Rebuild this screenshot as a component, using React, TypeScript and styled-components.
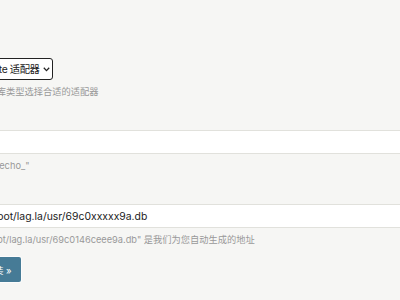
import styled, { createGlobalStyle } from 'styled-components'

const GlobalStyle = createGlobalStyle`
  html, body {
    margin: 0;
    padding: 0;
    background: #f6f6f4;
    overflow: hidden;
  }
  body {
    font-family: Inter, "Noto Sans CJK SC", sans-serif;
    color: #444;
  }
`

const Page = styled.div`
  width: 400px;
  height: 300px;
  overflow: hidden;
`

const Form = styled.form`
  margin-left: -68px;
  padding-top: 40px;
  width: 620px;
  display: flex;
  flex-direction: column;
`

const Row = styled.div`
  display: flex;
  flex-direction: column;
  align-items: flex-start;
  & + & {
    margin-top: 13px;
  }
`

const Label = styled.label`
  font-size: 11px;
  line-height: 16px;
  font-weight: 700;
  color: #444;
  margin-bottom: 2px;
`

const SelectWrap = styled.div`
  position: relative;
  display: inline-flex;
`

const Select = styled.select`
  appearance: none;
  height: 22px;
  padding: 0 12px 0 2px;
  border: 1px solid #222;
  border-radius: 3px;
  background: #fff;
  font-family: inherit;
  font-size: 10.3px;
  letter-spacing: -0.4px;
  color: #222;
`

const Chevron = styled.svg`
  position: absolute;
  right: 3px;
  top: 9px;
  pointer-events: none;
`

const Input = styled.input`
  box-sizing: border-box;
  width: 100%;
  height: 24px;
  padding: 0 2px;
  border: 1px solid #e1e1dc;
  background: #fff;
  font-family: inherit;
  font-size: 10.4px;
  color: #222;
  outline: none;
`

const Help = styled.p`
  margin: 5px 0 0;
  font-size: 9.25px;
  line-height: 14px;
  color: #999;
  white-space: nowrap;
`

const Submit = styled.button`
  align-self: flex-start;
  margin-top: 10px;
  height: 25px;
  padding: 0 9px;
  border: none;
  border-radius: 2px;
  background: #467b96;
  color: #fff;
  font-family: inherit;
  font-size: 9.5px;
  box-shadow: 0 0 0 1px rgba(255, 255, 255, 0.7);
`

export default function App() {
  return (
    <Page>
      <GlobalStyle />
      <Form onSubmit={(e) => e.preventDefault()}>
        <Row>
          <Label htmlFor="adapter">适配器</Label>
          <SelectWrap>
            <Select id="adapter" defaultValue="pdo-sqlite">
              <option value="pdo-sqlite">Pdo 驱动 SQLite 适配器</option>
            </Select>
            <Chevron width="7" height="5" viewBox="0 0 7 5">
              <path d="M0.8 0.8 L3.5 3.6 L6.2 0.8" fill="none" stroke="#222" strokeWidth="1.3" />
            </Chevron>
          </SelectWrap>
          <Help>请根据您的数据库类型选择合适的适配器</Help>
        </Row>
        <Row>
          <Label htmlFor="prefix">前缀</Label>
          <Input id="prefix" defaultValue="" />
          <Help>默认前缀是 "typecho_"</Help>
        </Row>
        <Row>
          <Label htmlFor="dbfile">数据库</Label>
          <Input id="dbfile" defaultValue="/www/wwwroot/lag.la/usr/69c0xxxxx9a.db" />
          <Help>"/www/wwwroot/lag.la/usr/69c0146ceee9a.db" 是我们为您自动生成的地址</Help>
        </Row>
        <Submit type="submit">确认, 开始安装 »</Submit>
      </Form>
    </Page>
  )
}
